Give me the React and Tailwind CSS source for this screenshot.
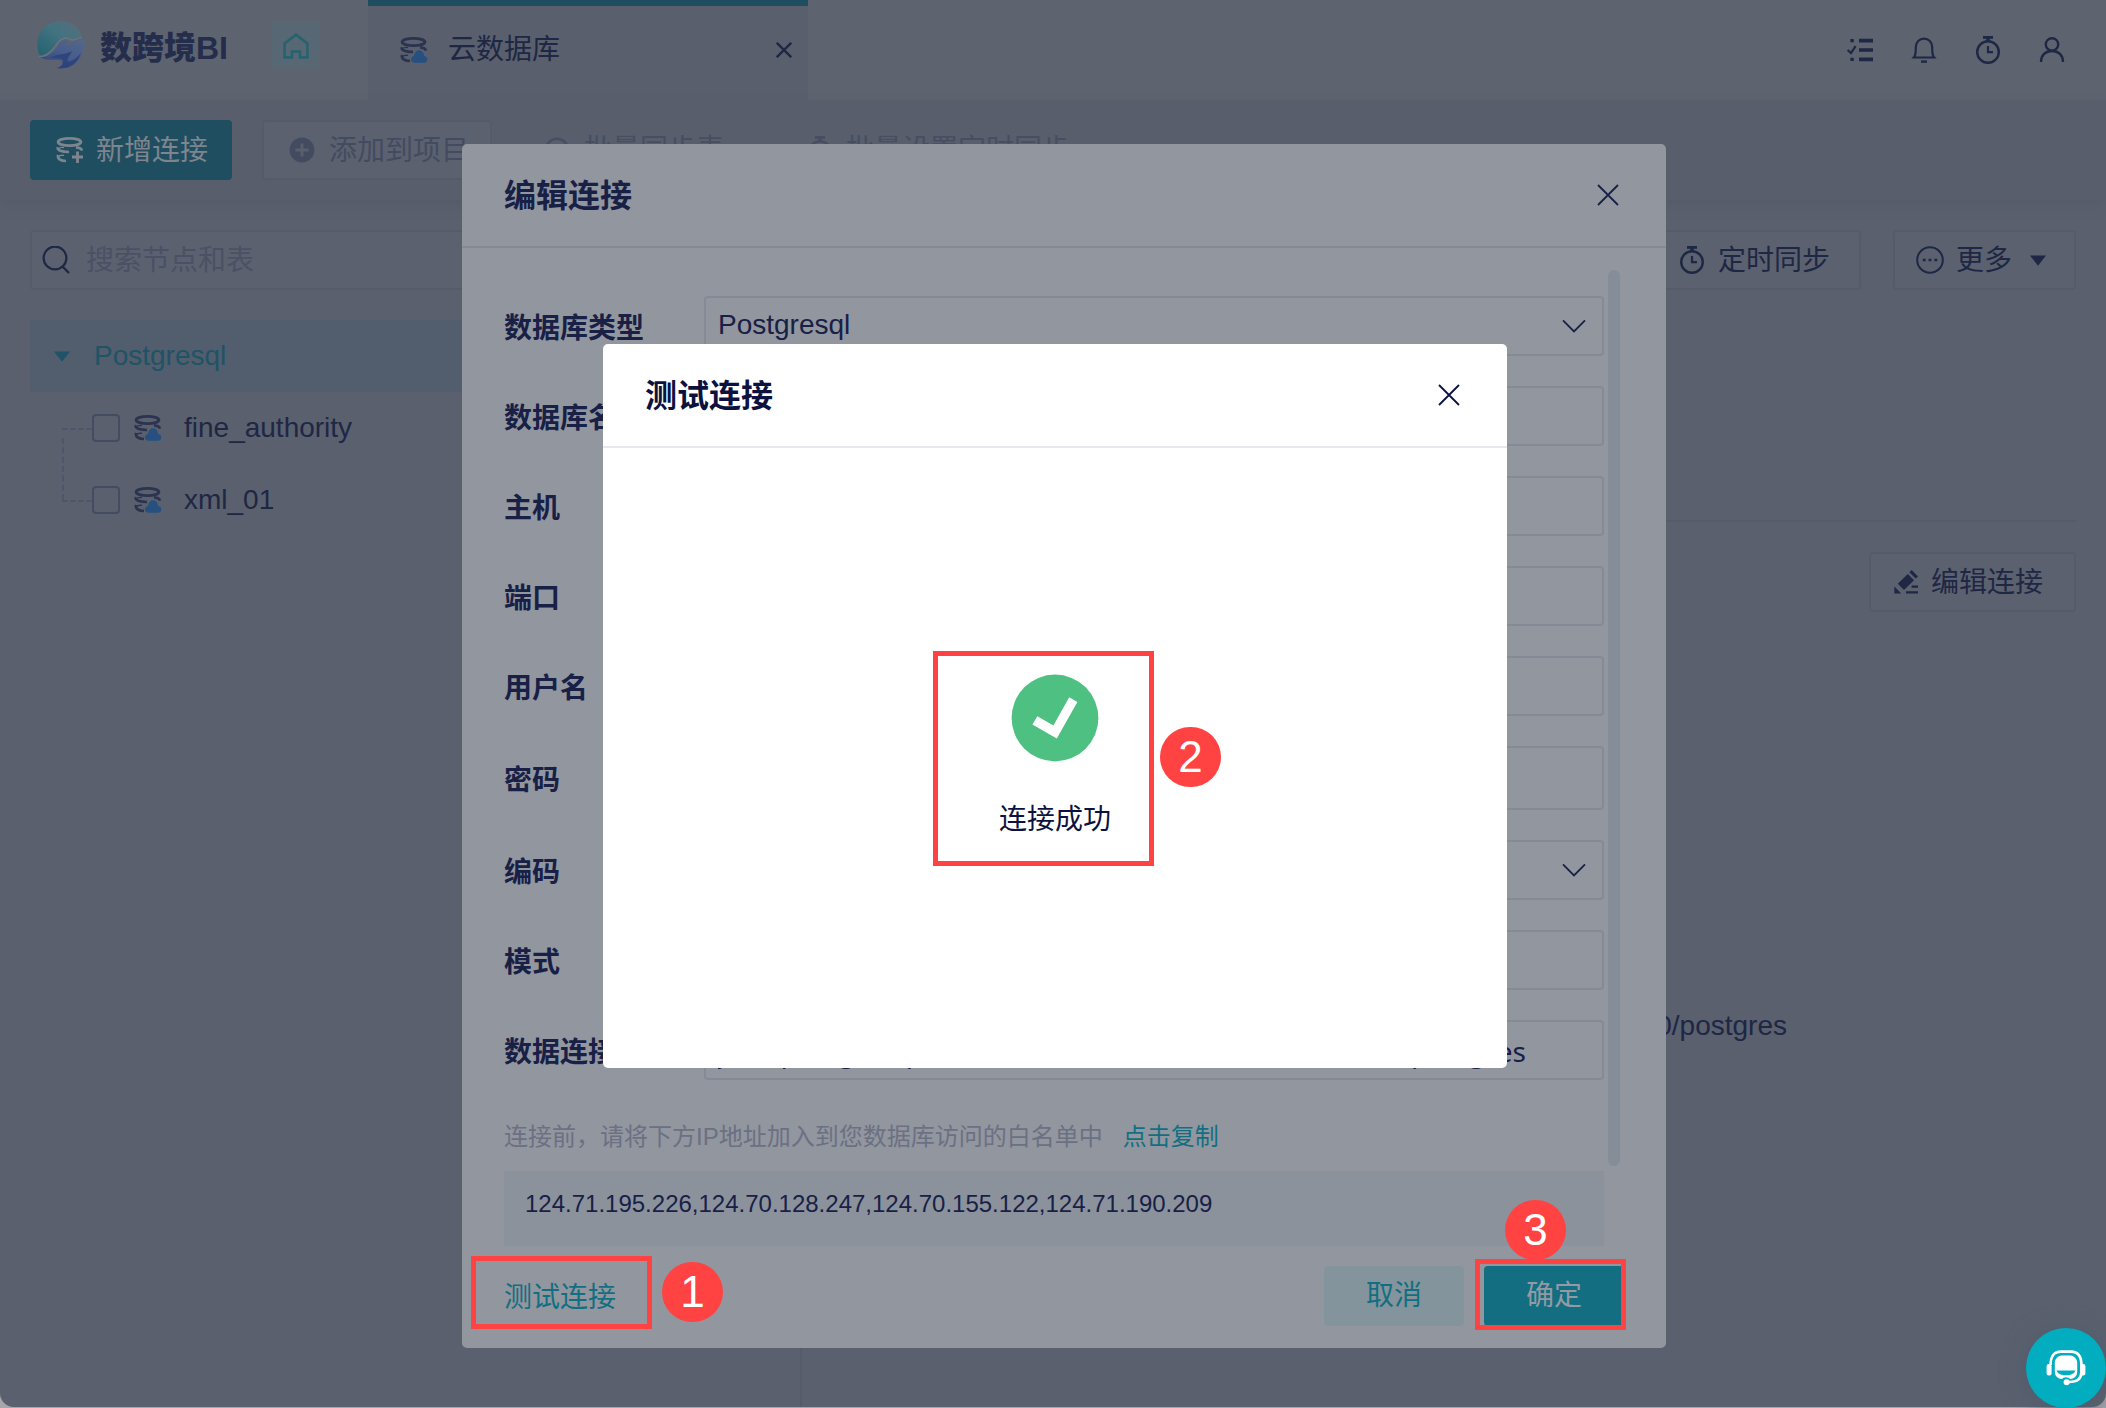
import React from "react";

const FONT = "font-['Liberation_Sans','Noto_Sans_CJK_SC',sans-serif]";

function Logo() {
  return (
    <svg width="52" height="52" viewBox="0 0 52 52" aria-hidden="true">
      <defs>
        <linearGradient id="lg-teal" x1="0" y1="1" x2="1" y2="0">
          <stop offset="0" stopColor="#24616f" />
          <stop offset="0.55" stopColor="#427380" />
          <stop offset="1" stopColor="#5b6c7b" />
        </linearGradient>
        <linearGradient id="lg-blue" x1="1" y1="0" x2="0" y2="1">
          <stop offset="0" stopColor="#52688c" />
          <stop offset="0.5" stopColor="#475c8a" />
          <stop offset="1" stopColor="#2c4178" />
        </linearGradient>
      </defs>
      <path d="M4 36 C-3 22 4 2 24 1 C36 0 45 9 46 17 C40 17 39 21 35 19 C29 16 25 19 21 25 C17 32 12 36 4 36 Z" fill="url(#lg-teal)" />
      <path d="M4 37 C13 38 18 31 22 26 C24 22 28 19 32 20 L29 26 C35 24 42 19 50 20 C48 22 48 25 47 29 C46 42 35 50 21 48 C26 47 28 43 26 41 C20 38 10 42 4 37 Z" fill="url(#lg-blue)" />
      <path d="M3 36.5 C11 37 16 31 20 25.5 C24 19 29 16.5 34.5 19.5 C38 21.5 41 17.5 46 17.5" fill="none" stroke="#6a7280" strokeWidth="1.6" />
      <path d="M14 38 C22 33 30 35 36 31 C34 36 30 38 32 42 C29 42 27 40 25 39 C21 38 18 38 14 38 Z" fill="#31457d" />
      <path d="M26 41 C34 44 41 38 45 33 C42 43 33 50 21 48 C26 47 28 43 26 41 Z" fill="#2b3f7a" opacity="0.8" />
    </svg>
  );
}

function Coils({ plus, cloud, className = "" }) {
  return (
    <svg width="28" height="28" viewBox="0 0 28 28" fill="none" stroke="currentColor" className={className} aria-hidden="true">
      <ellipse cx="13.5" cy="6" rx="11.4" ry="3.6" strokeWidth="2.8" />
      <path d="M2 11.2 C0.5 14.4 6 16 13 16 M20 11.4 C23.5 11.6 25.6 13 26 14.6" strokeWidth="2.7" />
      <path d="M2.2 19 C0.8 22.6 4.8 24.8 10 25" strokeWidth="2.7" />
      <path d="M1.6 13.6 C3 11.4 5 11 8 11.6 M1.6 21.4 C3 19 5 18.8 8 19.4" strokeWidth="1.4" />
      {plus && <path d="M21.5 15.5 V27 M16 21 H27" strokeWidth="2.8" />}
      {cloud && (
        <path
          d="M15 26.8 C10 26.8 9.8 20.6 14 20 C14.8 12.4 23.4 12.4 24.2 20 C28.6 20.6 28.2 26.8 24 26.8 Z"
          fill="#255080"
          stroke="none"
        />
      )}
    </svg>
  );
}

function Stopwatch() {
  return (
    <svg width="28" height="28" viewBox="0 0 28 28" fill="none" stroke="currentColor" aria-hidden="true">
      <circle cx="14" cy="16" r="10.8" strokeWidth="2.4" />
      <path d="M9 1.4 H19" strokeWidth="2.8" />
      <path d="M14 2 V5" strokeWidth="3.4" />
      <path d="M14 10 V16.2 H19" strokeWidth="2.2" />
    </svg>
  );
}

function Checklist() {
  return (
    <svg width="28" height="28" viewBox="0 0 28 28" fill="none" stroke="currentColor" aria-hidden="true">
      <path d="M13 4.6 H27 M13 14 H27 M13 23.4 H27" strokeWidth="3.6" />
      <path d="M4.4 4.6 H7.8 M4.4 23.4 H7.8" strokeWidth="3.4" />
      <path d="M1.6 14 L5 17 L9.6 10.2" strokeWidth="2.2" />
    </svg>
  );
}

function Bell() {
  return (
    <svg width="28" height="28" viewBox="0 0 28 28" fill="none" stroke="currentColor" strokeWidth="2.2" aria-hidden="true">
      <path d="M3.8 21.5 C6 19 5.8 16 5.8 11 C5.8 6 9.4 2.6 14 2.6 C18.6 2.6 22.2 6 22.2 11 C22.2 16 22 19 24.2 21.5 Z" />
      <path d="M11 25.6 H17" strokeWidth="2.4" />
    </svg>
  );
}

function Person() {
  return (
    <svg width="28" height="28" viewBox="0 0 28 28" fill="none" stroke="currentColor" strokeWidth="2.4" aria-hidden="true">
      <circle cx="14" cy="8.4" r="6.2" />
      <path d="M3 26 C3 19 7.6 15 14 15 C20.4 15 25 19 25 26" />
    </svg>
  );
}

function Home() {
  return (
    <svg width="28" height="28" viewBox="0 0 28 28" fill="none" stroke="currentColor" strokeWidth="2.6" aria-hidden="true">
      <path d="M2.6 25.4 V11.4 L14 2.6 L25.4 11.4 V25.4 H18 V19.6 H10 V25.4 Z" />
    </svg>
  );
}

function SearchIcon() {
  return (
    <svg width="28" height="28" viewBox="0 0 28 28" fill="none" stroke="currentColor" strokeWidth="2.2" aria-hidden="true">
      <circle cx="13" cy="12" r="11.4" />
      <path d="M20.6 20.6 L27 27" />
    </svg>
  );
}

function PlusCircle() {
  return (
    <svg width="26" height="26" viewBox="0 0 26 26" aria-hidden="true">
      <circle cx="13" cy="13" r="12.4" fill="currentColor" />
      <path d="M13 6.4 V19.6 M6.4 13 H19.6" stroke="#595f6d" strokeWidth="2.8" />
    </svg>
  );
}

function Ring() {
  return (
    <svg width="26" height="26" viewBox="0 0 26 26" fill="none" stroke="currentColor" aria-hidden="true">
      <circle cx="13" cy="13" r="11.2" strokeWidth="2.6" />
    </svg>
  );
}

function MoreCircle() {
  return (
    <svg width="28" height="28" viewBox="0 0 28 28" aria-hidden="true">
      <circle cx="14" cy="14" r="12.8" fill="none" stroke="currentColor" strokeWidth="2" />
      <path d="M6.8 12.7 H9.6 V15.3 H6.8 Z M12.6 12.7 H15.4 V15.3 H12.6 Z M18.4 12.7 H21.2 V15.3 H18.4 Z" fill="currentColor" />
    </svg>
  );
}

function Pencil() {
  return (
    <svg width="26" height="26" viewBox="0 0 26 26" fill="currentColor" aria-hidden="true">
      <path d="M18.6 1 L25 7.4 L22.6 9.6 L16.4 3.2 Z" />
      <path d="M14.8 5 L21 11.2 L11 21 L4.8 14.8 Z" />
      <path d="M1.4 17.4 L8.2 24.6 H1.4 Z" />
      <path d="M18.6 16.4 H25 V18.8 H18.6 Z M13 22.2 H25 V24.6 H13 Z" />
    </svg>
  );
}

function Caret() {
  return (
    <svg width="16" height="11" viewBox="0 0 16 11" fill="currentColor" aria-hidden="true">
      <path d="M0 0.5 H16 L8 10.8 Z" />
    </svg>
  );
}

function Cross({ size = 22, thick = 1.8 }) {
  return (
    <svg width={size} height={size} viewBox="0 0 22 22" stroke="currentColor" strokeWidth={thick} aria-hidden="true">
      <path d="M1 1 L21 21 M21 1 L1 21" />
    </svg>
  );
}

function Chevron() {
  return (
    <svg width="24" height="14" viewBox="0 0 24 14" fill="none" stroke="currentColor" strokeWidth="1.8" className="pointer-events-none absolute right-[18px] top-[23px]" aria-hidden="true">
      <path d="M1 1.4 L12 12.4 L23 1.4" />
    </svg>
  );
}

function Headset() {
  return (
    <svg width="40" height="36" viewBox="0 0 40 36" fill="none" aria-hidden="true">
      <path d="M4.6 15 C4.6 6 8 1.6 15 1.6 H25 C32 1.6 35.4 6 35.4 15 V22 C35.4 29 31 32 23 32" stroke="#fff" strokeWidth="2.6" />
      <rect x="0.6" y="14" width="5" height="11.4" rx="2.2" fill="#fff" />
      <rect x="34.4" y="14" width="5" height="11.4" rx="2.2" fill="#fff" />
      <rect x="8.8" y="5.6" width="22.4" height="23.4" rx="7" fill="#fff" />
      <path d="M10.6 20.4 H29.4 C28 26.8 12 26.8 10.6 20.4 Z" fill="#02adc0" />
      <path d="M15.5 29.4 C18 26.6 22 26.6 24.5 29.4 Z" fill="#02adc0" />
      <circle cx="20.6" cy="32.2" r="3" fill="#fff" />
    </svg>
  );
}

function Step({ n, className }) {
  return (
    <span className={`absolute flex h-[60px] w-[61px] items-center justify-center rounded-full bg-[#ff4343] text-[44px] leading-none text-white ${className}`}>
      {n}
    </span>
  );
}

function DialogHead({ title, line }) {
  return (
    <div className={`flex h-[104px] items-center justify-between border-b-2 px-[42px] ${line}`}>
      <h2 className="pt-px text-[32px] font-bold leading-10">{title}</h2>
      <button aria-label="关闭" className="flex h-8 w-8 items-center justify-center">
        <Cross />
      </button>
    </div>
  );
}

const fields = [
  { id: "type", label: "数据库类型", value: "Postgresql", select: true },
  { id: "name", label: "数据库名称" },
  { id: "host", label: "主机" },
  { id: "port", label: "端口" },
  { id: "user", label: "用户名" },
  { id: "password", label: "密码", tall: true },
  { id: "charset", label: "编码", value: "", select: true },
  { id: "schema", label: "模式" },
  { id: "url", label: "数据连接URL", value: "jdbc:postgresql://database.internal.cloud.dev:54300/postgres", wide: true },
];

function Field({ f }) {
  const box = "w-full rounded-[4px] border-2 border-[#858a96] bg-transparent px-3 text-[28px] outline-none";
  return (
    <div className="flex items-center">
      <label htmlFor={f.id} className="w-[200px] shrink-0 whitespace-nowrap pt-[5px] text-[28px] font-bold leading-8">
        {f.label}
      </label>
      <div className="relative flex min-w-0 flex-1">
        {f.select ? (
          <>
            <select id={f.id} defaultValue={f.value} className={`h-[60px] appearance-none pb-[2px] ${box}`}>
              <option value={f.value}>{f.value}</option>
            </select>
            <Chevron />
          </>
        ) : (
          <input
            id={f.id}
            type={f.tall ? "password" : "text"}
            defaultValue={f.value || ""}
            className={`${f.tall ? "h-16" : "h-[60px]"} ${f.wide ? "pt-[2px] font-['Noto_Sans',sans-serif]" : ""} ${box}`}
          />
        )}
      </div>
    </div>
  );
}

function TreeItem({ id, label, last }) {
  return (
    <li className="relative flex h-[72px] items-center pl-[62px]">
      <span className="absolute left-8 top-1/2 w-[30px] border-t-2 border-dashed border-[#50566a]" />
      {!last && <span className="absolute left-8 top-[46px] h-[62px] border-l-2 border-dashed border-[#50566a]" />}
      <input id={id} type="checkbox" className="h-7 w-7 appearance-none rounded-[4px] border-2 border-[#444c62]" />
      <label htmlFor={id} className="ml-[14px] flex items-center gap-[22px] text-[28px] leading-8">
        <Coils cloud className="text-[#2b3350]" />
        {label}
      </label>
    </li>
  );
}

const ghost = "flex h-[60px] items-center whitespace-nowrap rounded-[4px] border-2 border-[#555b69] bg-[#5b616f] text-[28px]";

export default function App() {
  return (
    <div className={`relative flex min-h-screen flex-col overflow-hidden bg-[#a6a7aa] pb-px text-[#1e2744] ${FONT}`}>
      <div className="flex flex-1 flex-col overflow-hidden rounded-b-[14px] bg-[#5a606e]">
        <header className="flex h-[100px] bg-[#5d636f]">
          <div className="flex w-[368px] shrink-0 items-start pl-9 pt-5">
            <Logo />
            <span className="ml-3 mt-3 whitespace-nowrap text-[32px] font-black leading-8 text-[#242d4c]">数跨境BI</span>
            <button aria-label="首页" className="ml-auto mr-12 mt-[2px] flex h-12 w-12 items-center justify-center bg-[#576773] text-[#27636f]">
              <Home />
            </button>
          </div>
          <div className="flex w-[440px] shrink-0 items-start border-t-[6px] border-[#1e4e60] bg-[#595f6c] pl-8 pr-4 pt-7">
            <Coils cloud className="mt-[2px] text-[#2b3350]" />
            <span className="ml-5 text-[28px] leading-8">云数据库</span>
            <button aria-label="关闭标签" className="ml-auto mt-2 flex h-4 w-4 items-center justify-center">
              <Cross size={16} thick={3.2} />
            </button>
          </div>
          <nav className="flex flex-1 items-center justify-end gap-9 pr-10">
            <button aria-label="任务"><Checklist /></button>
            <button aria-label="通知"><Bell /></button>
            <button aria-label="定时"><Stopwatch /></button>
            <button aria-label="账户"><Person /></button>
          </nav>
        </header>

        <div className="flex h-[100px] items-center gap-[30px] bg-[#585e6c] pl-[30px] shadow-[0_6px_10px_-2px_#555b69]">
          <button className="flex h-[60px] w-[202px] items-center gap-3 whitespace-nowrap rounded-[4px] bg-[#1e4e60] pl-[26px] text-[28px] text-[#7e858f]">
            <Coils plus />
            <span className="pt-[2px]">新增连接</span>
          </button>
          <button className={`${ghost} w-[230px] gap-[14px] pl-[25px] text-[#434b60]`}>
            <PlusCircle />
            <span className="pt-[2px]">添加到项目</span>
          </button>
          <button className="flex items-center gap-[14px] whitespace-nowrap pl-[22px] text-[28px] text-[#474e62]">
            <Ring />
            批量同步表
          </button>
          <button className="flex items-center gap-3 whitespace-nowrap pl-[52px] text-[28px] text-[#474e62]">
            <Stopwatch />
            批量设置定时同步
          </button>
        </div>

        <main className="flex flex-1">
          <aside className="w-[802px] shrink-0 border-r-2 border-[#565b69] pl-[30px] pr-7 pt-[30px]">
            <div className="flex h-[60px] items-center gap-4 rounded-[4px] border-2 border-[#555b69] bg-[#5b616f] pl-[10px]">
              <SearchIcon />
              <input aria-label="搜索节点和表" placeholder="搜索节点和表" className="flex-1 bg-transparent pt-[2px] text-[28px] outline-none placeholder:text-[#4b5164]" />
            </div>
            <button className="mt-[30px] flex h-[72px] w-full items-center gap-6 bg-[#525e6d] pl-6 text-[28px] text-[#1f5365]">
              <Caret />
              Postgresql
            </button>
            <ul>
              <TreeItem id="fine" label="fine_authority" />
              <TreeItem id="xml" label="xml_01" last />
            </ul>
          </aside>
          <section className="flex-1 pl-7 pr-[30px] pt-[30px]">
            <div className="flex justify-end gap-8">
              <button className={`${ghost} w-[210px] gap-3 pl-[25px]`}>
                <Stopwatch />
                <span className="pt-[2px]">定时同步</span>
              </button>
              <button className={`${ghost} w-[183px] gap-3 pl-[21px]`}>
                <MoreCircle />
                <span className="pt-[2px]">更多</span>
                <span className="ml-[6px]"><Caret /></span>
              </button>
            </div>
            <hr className="mt-[230px] border-t-2 border-[#555b69]" />
            <div className="mt-[30px] flex justify-end">
              <button className={`${ghost} w-[207px] gap-3 pl-[22px]`}>
                <Pencil />
                <span className="pt-[2px]">编辑连接</span>
              </button>
            </div>
            <p className="mt-[398px] pr-[289px] text-right text-[28px] leading-8">0/postgres</p>
          </section>
        </main>
      </div>

      <button aria-label="在线客服" className="absolute bottom-0 right-0 flex h-20 w-20 items-center justify-center rounded-full bg-[#02adc0] shadow-[0_4px_24px_#4f5c6d]">
        <Headset />
      </button>

      {/* Edit connection dialog */}
      <div className="absolute inset-0 flex items-start justify-center pl-[22px] pt-36">
        <div role="dialog" aria-label="编辑连接" className="w-[1204px] rounded-[5px] bg-[#92969f] pb-[22px] text-[#182046]">
          <DialogHead title="编辑连接" line="border-[#858a96]" />
          <div className="flex pl-[42px] pr-[46px]">
            <div className="min-w-0 flex-1 pt-12">
              <div className="flex flex-col gap-[30px]">
                {fields.map((f) => (
                  <Field key={f.id} f={f} />
                ))}
              </div>
              <p className="mt-[41px] flex gap-5 whitespace-nowrap text-[24px] leading-8 text-[#6b7083]">
                连接前，请将下方IP地址加入到您数据库访问的白名单中
                <a href="#copy" className="text-[#126f82]">点击复制</a>
              </p>
              <p className="mt-[18px] h-[75px] bg-[#8b929c] pl-[21px] pt-[17px] text-[24px] leading-8">
                124.71.195.226,124.70.128.247,124.70.155.122,124.71.190.209
              </p>
            </div>
            <div className="ml-1 mt-[22px] h-[896px] w-3 rounded-full bg-[#858d98]" />
          </div>
          <div className="mt-5 flex h-[60px] items-center px-[42px]">
            <div className="relative">
              <button className="pt-1 text-[28px] leading-8 text-[#126f82]">测试连接</button>
              <span className="absolute -left-[33px] -top-[22px] h-[73px] w-[181px] border-[5px] border-[#ff4343]" />
              <Step n="1" className="-top-4 left-[158px]" />
            </div>
            <button className="ml-auto h-[60px] w-[140px] rounded-[4px] bg-[#84949c] pb-px text-[28px] text-[#126f82]">取消</button>
            <div className="relative ml-5">
              <button className="h-[60px] w-[140px] rounded-[4px] bg-[#126e80] pb-px text-[28px] text-[#929aa4]">确定</button>
              <span className="absolute -left-[9px] -top-[7px] h-[71px] w-[151px] border-[5px] border-[#ff4343]" />
              <Step n="3" className="-top-[66px] left-[21px]" />
            </div>
          </div>
        </div>
      </div>

      {/* Connection test dialog */}
      <div className="absolute inset-0 flex items-start justify-center pl-1 pt-[344px]">
        <div role="dialog" aria-label="测试连接" className="w-[904px] rounded-[5px] bg-white text-[#0b1240]">
          <DialogHead title="测试连接" line="border-[#e8e9ef]" />
          <div className="flex h-[620px] flex-col items-center pt-[226px]">
            <div className="relative flex flex-col items-center">
              <svg width="88" height="88" viewBox="0 0 88 88" aria-hidden="true">
                <circle cx="44" cy="44" r="43.4" fill="#4ec082" />
                <path d="M26.4 42.2 L42.4 51.4 L58.2 23.2 L66.4 28 L45.8 64.4 L21.4 50.6 Z" fill="#fff" />
              </svg>
              <p className="mt-[42px] text-[28px] leading-8">连接成功</p>
              <span className="absolute -left-[66px] -top-[23px] h-[215px] w-[221px] border-[5px] border-[#ff4343]" />
              <Step n="2" className="left-[161px] top-[53px]" />
            </div>
          </div>
        </div>
      </div>
    </div>
  );
}
